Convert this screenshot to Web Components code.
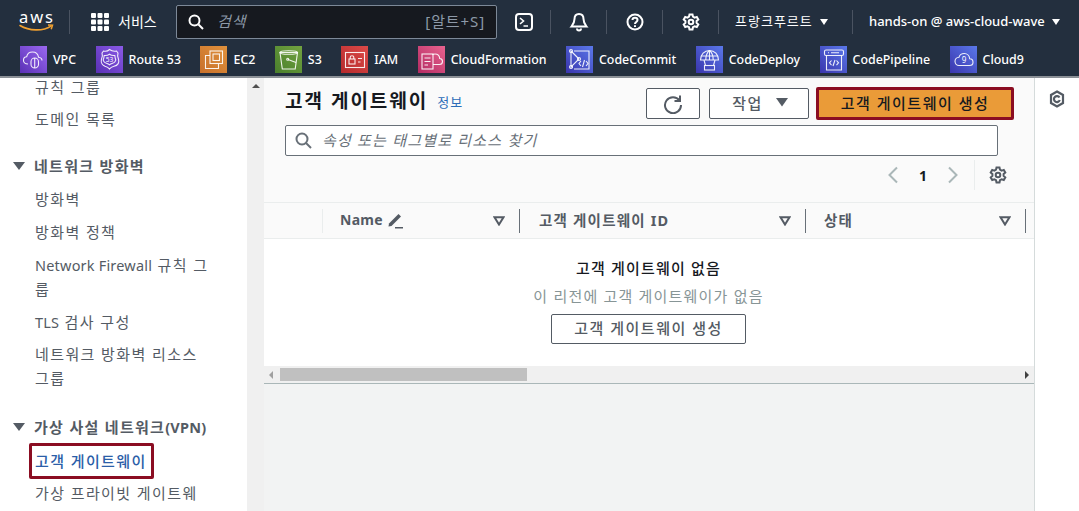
<!DOCTYPE html>
<html lang="ko">
<head>
<meta charset="utf-8">
<title>고객 게이트웨이</title>
<style>
  html, body { margin: 0; height: 100%; overflow: hidden; }
  body {
    font-family: "Noto Sans", "Noto Sans CJK KR", sans-serif;
    background: #f2f3f3;
    color: #16191f;
  }
  #app { display: flex; flex-direction: column; height: 511px; }
</style>
</head>
<body>
<div id="app">
  <aws-topbar></aws-topbar>
  <aws-favorites>
    <fav-item icon="vpc" label="VPC" c1="#5a30b5" c2="#9a68f0"></fav-item>
    <fav-item icon="route53" label="Route 53" c1="#5a30b5" c2="#8a5ae6"></fav-item>
    <fav-item icon="ec2" label="EC2" c1="#c8702a" c2="#e0913c"></fav-item>
    <fav-item icon="s3" label="S3" c1="#4a7f2c" c2="#72a340"></fav-item>
    <fav-item icon="iam" label="IAM" c1="#b52a2c" c2="#dc4a48"></fav-item>
    <fav-item icon="cf" label="CloudFormation" c1="#b32a62" c2="#e8638f"></fav-item>
    <fav-item icon="commit" label="CodeCommit" c1="#3a35ad" c2="#5a78ea"></fav-item>
    <fav-item icon="deploy" label="CodeDeploy" c1="#3a35ad" c2="#5a78ea"></fav-item>
    <fav-item icon="pipeline" label="CodePipeline" c1="#3a35ad" c2="#5a78ea"></fav-item>
    <fav-item icon="cloud9" label="Cloud9" c1="#3a35ad" c2="#5a78ea"></fav-item>
  </aws-favorites>
  <console-body>
    <side-nav slot="nav">
      <nav-link class="first">규칙 그룹</nav-link>
      <nav-link>도메인 목록</nav-link>
      <nav-heading>네트워크 방화벽</nav-heading>
      <nav-link>방화벽</nav-link>
      <nav-link>방화벽 정책</nav-link>
      <nav-link><span>Network Firewall</span> 규칙 그<br>룹</nav-link>
      <nav-link><span>TLS</span> 검사 구성</nav-link>
      <nav-link class="up">네트워크 방화벽 리소스 그룹</nav-link>
      <nav-heading class="last">가상 사설 네트워크<span>(VPN)</span></nav-heading>
      <nav-link active>고객 게이트웨이</nav-link>
      <nav-link>가상 프라이빗 게이트웨</nav-link>
    </side-nav>
    <gateway-panel slot="main"></gateway-panel>
    <help-rail slot="rail"></help-rail>
  </console-body>
</div>

<script>
const ICON_PATHS = {
  vpc: `<path d="M8 18c-3 0-4.500-1.800-4.500-3.800 0-2 1.500-3.400 3.200-3.500C7.200 7.800 9.800 6 12.500 6c3.200 0 5.600 2.300 6 5.200 2 .2 3.500 1.600 3.500 3.400"/><rect x="11" y="12" width="7.500" height="10" rx="3.700"/><path d="M14.700 12v10"/>`,
  route53: `<path d="M13.500 3.500c2 1.500 4.500 2 7 1.500l1.500 2c-.8 2.500-.6 4.500.6 6.500.8 3.500-1.500 6-4.600 6.800-2 .5-3.500 1.300-4.500 2.700-1-1.400-2.500-2.200-4.500-2.700C6.900 19.500 4.600 17 5.400 13.500c1.200-2 1.400-4 .6-6.500l1.500-2c2.500.5 4.500 0 6-1.500z"/><path d="M8.200 9.500c1.800.2 3.800-.2 5.300-1.300 1.500 1.100 3.500 1.500 5.300 1.300.2 1.800.4 3.200 1 4.500-.4 2-1.900 3-3.800 3.500-1 .3-1.800.7-2.500 1.300-.7-.6-1.500-1-2.500-1.300-1.900-.5-3.400-1.500-3.800-3.500.6-1.300.8-2.700 1-4.500z"/><text x="13.500" y="15.500" text-anchor="middle" font-size="6.500" fill="#fff" stroke="none">53</text>`,
  ec2: `<rect x="10" y="5" width="12.500" height="12.500"/><path d="M10 9.500H5.500v13H18.500V18"/><rect x="13" y="8" width="6.500" height="6.500"/>`,
  s3: `<path d="M5 6.500h17.500l-2.300 16.500H7.300z"/><ellipse cx="13.700" cy="6.500" rx="8.800" ry="1.800"/><path d="M13 13.500l8 3"/><circle cx="12.700" cy="13.300" r="1"/>`,
  iam: `<rect x="4.500" y="6.500" width="19" height="15"/><rect x="8" y="13" width="6" height="5"/><path d="M9.200 13v-1.500a1.800 1.800 0 0 1 3.600 0V13M17 12.500h4M17 16h2.500"/>`,
  cf: `<path d="M15 18.500h6.500c1.800 0 3-1.300 3-3s-1.200-2.900-2.800-3c-.2-2.700-2.200-4.500-4.700-4.500-1 0-1.900.3-2.700.8"/><rect x="4" y="8" width="11" height="15"/><path d="M6.500 12h6M6.500 15.500h6M6.500 19h3.500"/>`,
  commit: `<path d="M5 5v16l8-8zM5 5l8 8M5 21h2M8 5h15v18H8"/><circle cx="5" cy="5" r="1.500"/><circle cx="5" cy="21" r="1.500"/><circle cx="13" cy="13" r="1.500"/><path d="M15 15l-2 2.500 2 2.500M20 15l2 2.500-2 2.500M18.500 14l-2 7"/>`,
  deploy: `<path d="M4.500 14c0-5.500 4-9.500 9-9.500s9 4 9 9.500z"/><path d="M13.500 4.500c-2.500 2-3.700 5.500-3.700 9.500M13.500 4.500c2.500 2 3.700 5.500 3.700 9.500M13.500 4.500V14M5.500 10h16"/><path d="M8 14l1.500 5.500M19 14l-1.500 5.500"/><rect x="8.500" y="19.500" width="10" height="4.500"/>`,
  pipeline: `<rect x="4.500" y="4" width="19" height="5.500" rx="1.500"/><path d="M6.500 9.500v14.500h15V9.500"/><path d="M8 6.700h1M11 6.700h8M11.500 14.500l-2 2.300 2 2.300M16.500 14.500l2 2.300-2 2.300M15 14l-2 6"/>`,
  cloud9: `<path d="M9 19.500h10.500c2 0 3.500-1.500 3.500-3.300 0-1.900-1.500-3.300-3.300-3.400-.2-3-2.400-5.300-5.500-5.300-2.500 0-4.500 1.600-5.200 3.700-2.200.1-4 1.900-4 4.100 0 2.300 1.800 4.200 4 4.200z"/><text x="14" y="17" text-anchor="middle" font-size="8" fill="#fff" stroke="none">9</text>`
};

class FavItem extends HTMLElement {
  connectedCallback() {
    const root = this.shadowRoot || this.attachShadow({ mode: 'open' });
    const icon = ICON_PATHS[this.getAttribute('icon')] || '';
    root.innerHTML = `
      <style>
        :host { display: flex; align-items: center; gap: 6px; height: 27px; }
        .tile {
          width: 27px; height: 27px; flex: none;
          background: linear-gradient(45deg, ${this.getAttribute('c1')}, ${this.getAttribute('c2')});
        }
        svg { display: block; fill: none; stroke: #fff; stroke-width: 1.100; stroke-opacity: .9; }
        span { font-size: 12.400px; font-weight: 500; color: #fff; white-space: nowrap; }
      </style>
      <div class="tile"><svg width="27" height="27" viewBox="0 0 27 27">${icon}</svg></div>
      <span>${this.getAttribute('label')}</span>
    `;
  }
}

class AwsFavorites extends HTMLElement {
  constructor() {
    super();
    this.attachShadow({ mode: 'open' }).innerHTML = `
      <style>
        :host {
          display: flex; align-items: flex-start; gap: 19.500px; flex: none;
          height: 35px; padding: 3px 0 0 20px; box-sizing: border-box;
          background: #232f3e; border-bottom: 2px solid #8b9096;
        }
      </style>
      <slot></slot>
    `;
  }
}

class AwsTopbar extends HTMLElement {
  constructor() {
    super();
    this.attachShadow({ mode: 'open' }).innerHTML = `
      <style>
        :host {
          display: flex; align-items: center; height: 43px; flex: none; padding-bottom: 3px; box-sizing: border-box; padding-top: 3px;
          background: #232f3e; color: #fff; font-size: 13px;
        }
        svg { display: block; overflow: visible; }
        .logo { width: 69px; padding-left: 19px; box-sizing: border-box; }
        .cell { display: flex; align-items: center; justify-content: center; height: 24px; }
        .sep { border-left: 1px solid #4a5361; }
        .services { width: 107px; box-sizing: border-box; padding-left: 21px; justify-content: flex-start; gap: 9px; font-size: 14px; }
        .services span, .search em, .search b, .region span, .user span { padding-bottom: 2px; }
        .search {
          width: 321px; height: 34px; box-sizing: border-box; display: flex; align-items: center;
          background: #16191f; border: 1px solid #7d8998; border-radius: 2px; padding: 0 11px 0 11px;
          color: #8d99a8;
        }
        .search em { margin-left: 13px; font-size: 15px; letter-spacing: 1px; flex: 1; }
        .search b { font-weight: 400; font-size: 15px; letter-spacing: .9px; }
        .console { width: 53px; }
        .w56 { width: 55px; }
        .region { width: 134px; box-sizing: border-box; padding-left: 16px; justify-content: flex-start; letter-spacing: 1px; }
        .user { flex: 1; padding-left: 16px; box-sizing: border-box; justify-content: flex-start; font-weight: 500; }
        .caret { width: 0; height: 0; border: 4px solid transparent; border-top: 6px solid #fff; border-bottom: 0; margin-left: 7px; }
      </style>
      <div class="logo">
        <svg width="35" height="24" viewBox="0 0 35 24">
          <text x="0" y="13" font-family="Noto Sans, sans-serif" font-size="16.500" fill="#fff" textLength="34">aws</text>
          <path d="M1 15.500c9 5.500 23 6 31 .6" fill="none" stroke="#f0a030" stroke-width="1.600" stroke-linecap="round"/>
          <path d="M29 15l4.500 .2-1.300 4.100" fill="none" stroke="#f0a030" stroke-width="1.500"/>
        </svg>
      </div>
      <div class="cell sep services">
        <svg width="18" height="18" viewBox="0 0 18 18" fill="#fff">
          <rect width="5" height="5" rx="1"/><rect x="6.500" width="5" height="5" rx="1"/><rect x="13" width="5" height="5" rx="1"/>
          <rect y="6.500" width="5" height="5" rx="1"/><rect x="6.500" y="6.500" width="5" height="5" rx="1"/><rect x="13" y="6.500" width="5" height="5" rx="1"/>
          <rect y="13" width="5" height="5" rx="1"/><rect x="6.500" y="13" width="5" height="5" rx="1"/><rect x="13" y="13" width="5" height="5" rx="1"/>
        </svg>
        <span>서비스</span>
      </div>
      <div class="search">
        <svg width="16" height="16" viewBox="0 0 16 16" fill="none" stroke="#fff" stroke-width="2"><circle cx="6.500" cy="6.500" r="5"/><path d="M10.500 10.500L15 15"/></svg>
        <em>검색</em>
        <b>[알트+S]</b>
      </div>
      <div class="cell console">
        <svg width="20" height="20" viewBox="0 0 20 20" fill="none" stroke="#fff" stroke-width="2"><rect x="2" y="2" width="16" height="16" rx="3"/><path d="M6 6l3.500 3L6 12M9.500 14H14" stroke-width="1.600"/></svg>
      </div>
      <div class="cell sep w56">
        <svg width="20" height="20" viewBox="0 0 20 20" fill="none" stroke="#fff" stroke-width="2"><path d="M10 2c-3 0-4.500 2.200-4.500 5 0 3.500-1 5-3 7.500h15c-2-2.500-3-4-3-7.500 0-2.800-1.500-5-4.500-5z"/><path d="M8 16.500a2 2 0 0 0 4 0"/></svg>
      </div>
      <div class="cell sep w56">
        <svg width="18" height="18" viewBox="0 0 18 18" fill="none" stroke="#fff" stroke-width="2"><circle cx="9" cy="9" r="7.500"/><path d="M6.500 7c0-1.500 1.100-2.300 2.500-2.300S11.500 5.500 11.500 7c0 2-2.500 2-2.500 4"/><path d="M9 12.300v1.700"/></svg>
      </div>
      <div class="cell sep w56">
        <svg width="18" height="18" viewBox="0 0 18 18" fill="none" stroke="#fff" stroke-width="2"><path d="M7.500 1.500h3l.5 2.200 1.600.9 2.200-.7 1.500 2.600-1.700 1.500v1.900l1.700 1.500-1.500 2.600-2.200-.7-1.600.9-.5 2.300h-3L7 14.200l-1.600-.9-2.200.7-1.500-2.600 1.700-1.500V8L1.700 6.500l1.500-2.600 2.200.7L7 3.700z"/><circle cx="9" cy="9" r="2.300"/></svg>
      </div>
      <div class="cell sep region"><span>프랑크푸르트</span><i class="caret"></i></div>
      <div class="cell sep user"><span>hands-on @ aws-cloud-wave</span><i class="caret"></i></div>
    `;
  }
}

class ConsoleBody extends HTMLElement {
  constructor() {
    super();
    this.attachShadow({ mode: 'open' }).innerHTML = `
      <style>
        :host { display: flex; flex: 1; min-height: 0; overflow: hidden; }
      </style>
      <slot name="nav"></slot>
      <slot name="main"></slot>
      <slot name="rail"></slot>
    `;
  }
}

class SideNav extends HTMLElement {
  constructor() {
    super();
    this.attachShadow({ mode: 'open' }).innerHTML = `
      <style>
        :host { display: flex; width: 264px; flex: none; background: #fff; overflow: hidden; }
        .list { width: 247px; box-sizing: border-box; padding: 0 37px 0 0; }
        .bar { width: 17px; background: #f0f0f0; display: flex; justify-content: center; padding-top: 6px; box-sizing: border-box; }
        .up { width: 0; height: 0; border: 4px solid transparent; border-bottom: 4px solid #505050; border-top: 0; }
      </style>
      <div class="list"><slot></slot></div>
      <div class="bar"><i class="up"></i></div>
    `;
  }
}

class NavLink extends HTMLElement {
  constructor() {
    super();
    this.attachShadow({ mode: 'open' }).innerHTML = `
      <style>
        :host {
          display: block; padding: 4px 0 5px 35px; font-size: 15px; line-height: 24px; color: #545b64; letter-spacing: 1.400px;
        }
        :host(.first) { padding-top: 0; padding-bottom: 7px; line-height: 18px; }
        :host(.up) { margin-top: -1px; }
        ::slotted(span) { letter-spacing: .2px; font-size: 14.500px; }
        :host([active]) { color: #2b5ea8; font-weight: 500; padding: 0 0 0 29px; margin-bottom: -2px; }
        :host([active]) .box {
          display: block; width: max-content; padding: 0 4px 0 3px; border: 3px solid #8b0d22; border-radius: 2px;
          height: 36px; line-height: 30px; box-sizing: border-box;
        }
      </style>
      <span class="box"><slot></slot></span>
    `;
  }
}

class NavHeading extends HTMLElement {
  constructor() {
    super();
    this.attachShadow({ mode: 'open' }).innerHTML = `
      <style>
        :host {
          display: flex; align-items: center; gap: 9px; padding: 0 0 1px 13px; margin-top: 13px; box-sizing: border-box;
          height: 34px; font-size: 15px; font-weight: 700; color: #545b64; letter-spacing: 1.300px; white-space: nowrap;
        }
        :host(.last) { margin-top: 15px; height: 33px; padding-bottom: 0; }
        ::slotted(span) { letter-spacing: .2px; font-size: 14.500px; }
        i { width: 0; height: 0; border: 6px solid transparent; border-top: 8px solid #545b64; border-bottom: 0; }
      </style>
      <i></i><span><slot></slot></span>
    `;
  }
}

class AwsButton extends HTMLElement {
  constructor() {
    super();
    this.attachShadow({ mode: 'open' }).innerHTML = `
      <style>
        :host {
          display: inline-flex; align-items: center; justify-content: center; gap: 12px; box-sizing: border-box;
          height: 31px; padding-bottom: 3px; background: #fff; border: 1px solid #545b64; border-radius: 2px;
          font-size: 15px; font-weight: 500; color: #545b64; letter-spacing: 1.500px;
        }
        :host([primary]) {
          height: 33px; background: #ea9b38; border: 3px solid #8b0d22; color: #16191f;
        }
      </style>
      <slot></slot>
    `;
  }
}

class ColumnHead extends HTMLElement {
  connectedCallback() {
    const root = this.shadowRoot || this.attachShadow({ mode: 'open' });
    root.innerHTML = `
      <style>
        :host {
          display: flex; align-items: center; box-sizing: border-box; height: 24px;
          padding: 0 14px 0 17px; border-right: 1px solid #687078;
          font-size: 14px; font-weight: 700; color: #545b64; gap: 6px;
        }
        :host(.ko) { font-size: 14.500px; padding-left: 19px; }
        :host(.ko) span { letter-spacing: 1.200px; }
        :host(.last) { padding-left: 18px; }
        span { flex: 1; display: flex; align-items: center; gap: 3px; letter-spacing: .3px; padding-bottom: 2px; }
        svg { display: block; flex: none; }
      </style>
      <span><slot></slot></span>
      <svg width="12" height="10" viewBox="0 0 12 10"><path d="M1.500 1.200h9L6 8.500z" fill="none" stroke="#545b64" stroke-width="2"/></svg>
    `;
  }
}

class GatewayPanel extends HTMLElement {
  constructor() {
    super();
    this.attachShadow({ mode: 'open' }).innerHTML = `
      <style>
        :host { display: flex; flex-direction: column; flex: 1; min-width: 0; background: #f2f3f3; overflow: hidden; }
        svg { display: block; }
        .head { background: #fafafa; height: 124px; box-sizing: border-box; padding: 10px 20px 0 21px; }
        .titlerow { display: flex; align-items: center; height: 31px; }
        .titlerow h1 { position: relative; top: -4px; }
        .titlerow a { position: relative; top: -2px; }
        h1 { margin: 0; font-size: 19px; font-weight: 700; color: #16191f; letter-spacing: 2px; }
        a { margin-left: 9px; font-size: 13px; letter-spacing: 1px; color: #2b6cb8; }
        .actions { margin-left: auto; display: flex; align-items: center; gap: 9px; }
        .actions aws-button:last-child { margin-left: -2px; }
        .refresh { width: 54px; padding-bottom: 0; }
        .action { width: 100px; padding-left: 3px; }
        .create { width: 198px; }
        .filter {
          display: flex; align-items: center; gap: 10px; box-sizing: border-box;
          height: 31px; margin: 6px 16px 0 0; padding: 0 9px; background: #fff;
          border: 1px solid #687078; border-radius: 2px; color: #687078; font-size: 15px; letter-spacing: 1.200px; font-style: italic;
        }
        .filter span { padding-bottom: 2px; }
        .pager { display: flex; align-items: center; justify-content: flex-end; height: 38px; margin-right: 7px; }
        .pager b { font-size: 14px; color: #16191f; width: 48px; text-align: center; }
        .pager .gear { border-left: 1px solid #eaeded; padding-left: 14px; margin-left: 15px; height: 30px; display: flex; align-items: center; }
        .columns {
          display: grid; grid-template-columns: 59px 197px 286px 220px; align-items: center;
          height: 37px; box-sizing: border-box; background: #fafafa;
          border-top: 1px solid #eaeded; border-bottom: 1px solid #eaeded;
        }
        .columns .blank { height: 24px; border-right: 1px solid #eaeded; }
        .empty {
          background: #fff; height: 127px; box-sizing: border-box; padding: 19px 1px 0 0;
          display: flex; flex-direction: column; align-items: center;
        }
        .empty strong { font-size: 15px; font-weight: 500; letter-spacing: 1.200px; line-height: 20px; color: #16191f; }
        .empty p { margin: 8px 0 8px; font-size: 15px; letter-spacing: 1.200px; line-height: 20px; color: #879596; }
        .empty aws-button { width: 195px; height: 30px; }
        .hscroll { height: 17px; background: #f0f0f0; display: flex; align-items: center; padding: 0 5px; box-sizing: border-box; }
        .hscroll .thumb { width: 247px; height: 13px; background: #c0c0c0; margin-left: 7px; }
        .hscroll i { width: 0; height: 0; border: 4px solid transparent; }
        .hscroll .l { border-right: 4px solid #a0a0a0; border-left: 0; }
        .hscroll .r { border-left: 4px solid #404040; border-right: 0; margin-left: auto; }
        .rule { height: 1px; background: #aab7b8; }
      </style>
      <div class="head">
        <div class="titlerow">
          <h1>고객 게이트웨이</h1><a>정보</a>
          <div class="actions">
            <aws-button class="refresh">
              <svg width="20" height="20" viewBox="0 0 20 20" fill="none" stroke="#545b64" stroke-width="2"><path d="M16.500 6.500A8 8 0 1 0 18 11"/><path d="M17 1.500v5.500h-5.500"/></svg>
            </aws-button>
            <aws-button class="action">작업
              <svg width="14" height="10" viewBox="0 0 14 10"><path d="M1 1h12L7 9.500z" fill="#545b64"/></svg>
            </aws-button>
            <aws-button class="create" primary>고객 게이트웨이 생성</aws-button>
          </div>
        </div>
        <div class="filter">
          <svg width="17" height="17" viewBox="0 0 17 17" fill="none" stroke="#687078" stroke-width="2"><circle cx="7" cy="7" r="5.500"/><path d="M11 11l5 5"/></svg>
          <span>속성 또는 태그별로 리소스 찾기</span>
        </div>
        <div class="pager">
          <svg width="12" height="18" viewBox="0 0 12 18" fill="none" stroke="#aab7b8" stroke-width="2"><path d="M10 1.500L2.500 9l7.500 7.500"/></svg>
          <b>1</b>
          <svg width="12" height="18" viewBox="0 0 12 18" fill="none" stroke="#aab7b8" stroke-width="2"><path d="M2 1.500L9.500 9 2 16.500"/></svg>
          <div class="gear">
            <svg width="18" height="18" viewBox="0 0 18 18" fill="none" stroke="#545b64" stroke-width="2"><path d="M7.500 1.500h3l.5 2.200 1.600.9 2.200-.7 1.500 2.600-1.700 1.500v1.900l1.700 1.500-1.500 2.600-2.200-.7-1.600.9-.5 2.300h-3L7 14.200l-1.600-.9-2.200.7-1.500-2.600 1.700-1.500V8L1.700 6.500l1.500-2.600 2.200.7L7 3.700z"/><circle cx="9" cy="9" r="2.300"/></svg>
          </div>
        </div>
      </div>
      <div class="columns">
        <div class="blank"></div>
        <column-head>Name
          <svg width="18" height="18" viewBox="0 0 18 18" fill="#545b64"><path d="M3 12.500L12.500 3l2.500 2.500L5.500 15 2.500 15.500z"/><path d="M9 16h8v1.500H9z"/></svg>
        </column-head>
        <column-head class="ko">고객 게이트웨이 ID</column-head>
        <column-head class="ko last">상태</column-head>
      </div>
      <div class="empty">
        <strong>고객 게이트웨이 없음</strong>
        <p>이 리전에 고객 게이트웨이가 없음</p>
        <aws-button>고객 게이트웨이 생성</aws-button>
      </div>
      <div class="hscroll"><i class="l"></i><div class="thumb"></div><i class="r"></i></div>
      <div class="rule"></div>
    `;
  }
}

class HelpRail extends HTMLElement {
  constructor() {
    super();
    this.attachShadow({ mode: 'open' }).innerHTML = `
      <style>
        :host { display: flex; justify-content: center; align-items: flex-start; width: 45px; flex: none; box-sizing: border-box; background: #fff; border-left: 1px solid #d5dbdb; padding-top: 12px; }
        svg { display: block; }
      </style>
      <svg width="16" height="18" viewBox="0 0 16 18" fill="none" stroke="#545b64" stroke-width="2.200">
        <path d="M8 1.500l6 3.500v8l-6 3.500L2 13V5z"/>
        <path d="M10.500 7.500a3 3 0 1 0 .3 2.500"/>
      </svg>
    `;
  }
}

customElements.define('aws-topbar', AwsTopbar);
customElements.define('aws-favorites', AwsFavorites);
customElements.define('fav-item', FavItem);
customElements.define('console-body', ConsoleBody);
customElements.define('side-nav', SideNav);
customElements.define('nav-link', NavLink);
customElements.define('nav-heading', NavHeading);
customElements.define('aws-button', AwsButton);
customElements.define('column-head', ColumnHead);
customElements.define('gateway-panel', GatewayPanel);
customElements.define('help-rail', HelpRail);
</script>
</body>
</html>
